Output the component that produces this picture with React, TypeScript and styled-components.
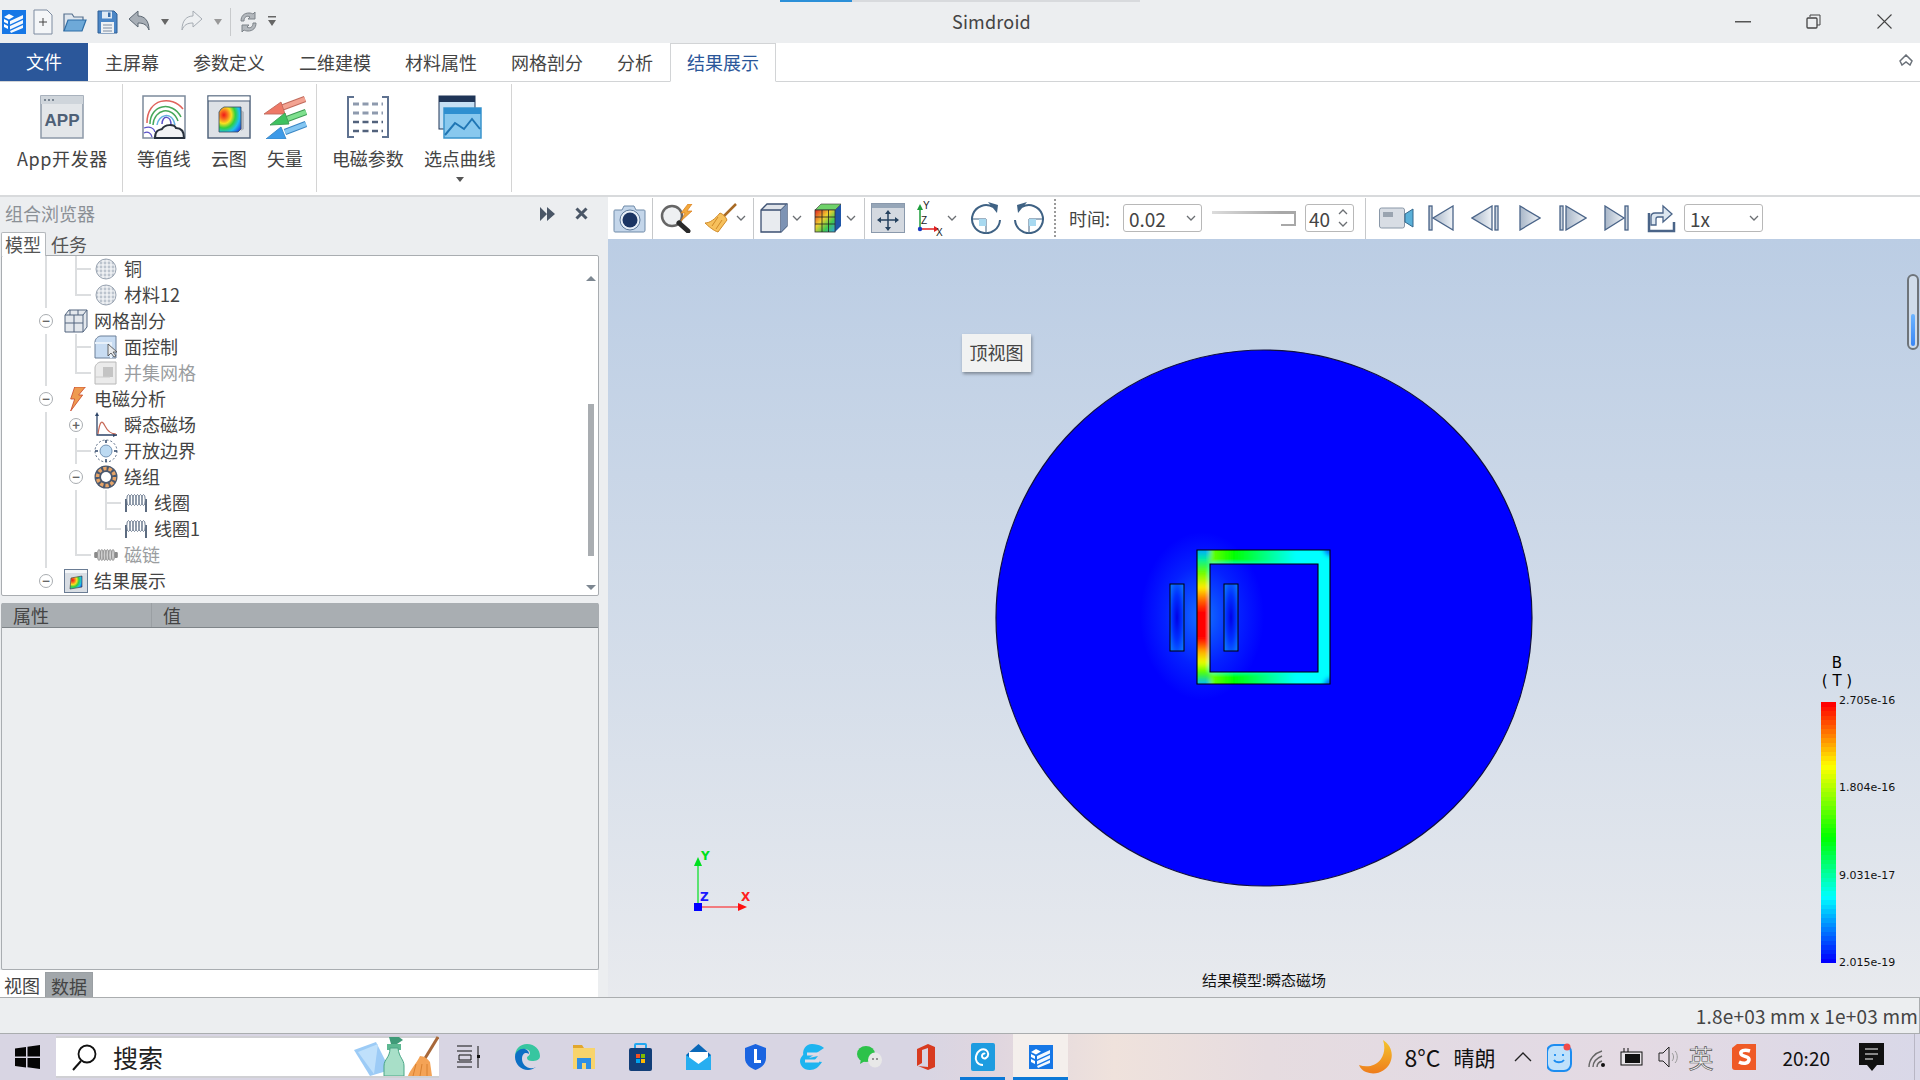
import React from "react";
import styled, { createGlobalStyle } from "styled-components";

const Global = createGlobalStyle`
  html, body { margin: 0; padding: 0; width: 1920px; height: 1080px; overflow: hidden; background: #eceef0; }
  body { font-family: "Noto Sans CJK SC", "Microsoft YaHei", sans-serif; font-size: 18px; color: #444; }
  svg { display: block; flex-shrink: 0; }
`;

const Shell = styled.div`width:1920px;height:1080px;display:flex;flex-direction:column;overflow:hidden;`;
const Hidden = styled.svg`position:absolute;width:0;height:0;`;
const Slot = styled.div<{ $ml?: number }>`display:flex;align-items:center;justify-content:center;flex-shrink:0;margin-left:${p => p.$ml ?? 0}px;`;

/* ---------- title bar ---------- */
const TitleBar = styled.header`height:43px;flex-shrink:0;background:#eceef0;display:flex;align-items:center;position:relative;`;
const TopAccent = styled.div`position:absolute;left:780px;top:0;width:360px;height:2px;background:linear-gradient(90deg,#2b8fd8 0,#2b8fd8 20%,#d8dadd 20%,#d8dadd 100%);`;
const TitleText = styled.div`flex:1;text-align:center;font-size:18px;line-height:24px;padding-bottom:2px;color:#444;letter-spacing:.2px;`;
const QuickSep = styled.div<{ $ml: number }>`width:1px;height:28px;background:#c8cacc;margin-left:${p => p.$ml}px;`;
const WinControls = styled.div`width:213px;display:flex;flex-shrink:0;`;
const WinBtn = styled.div`width:71px;height:43px;display:flex;align-items:center;justify-content:center;`;

/* ---------- ribbon ---------- */
const TabStrip = styled.nav`height:39px;flex-shrink:0;background:#fff;border-bottom:1px solid #d2d4d6;box-sizing:border-box;display:flex;position:relative;`;
const FileTab = styled.div`width:88px;background:#2b579a;color:#fff;display:flex;align-items:center;justify-content:center;font-size:18px;padding-bottom:2px;box-sizing:border-box;`;
const Tab = styled.div<{ $active?: boolean }>`
  padding:0 16px 2px;display:flex;align-items:center;font-size:18px;box-sizing:border-box;
  color:${p => (p.$active ? "#2b579a" : "#444")};
  border:1px solid ${p => (p.$active ? "#d2d4d6" : "transparent")};
  border-bottom:${p => (p.$active ? "1px solid #fff" : "1px solid transparent")};
  height:39px;
`;
const Collapse = styled.div`position:absolute;right:7px;top:11px;`;
const Ribbon = styled.section`height:115px;flex-shrink:0;background:#fff;border-bottom:2px solid #d8dadc;box-sizing:border-box;padding:2px 0 3px;display:flex;`;
const RGroup = styled.div<{ $pl: number; $pr: number }>`display:flex;gap:20px;padding:0 ${p => p.$pr}px 0 ${p => p.$pl}px;border-right:1px solid #d4d4d4;`;
const RButton = styled.div`display:flex;flex-direction:column;align-items:center;padding-top:11px;`;
const RIcon = styled.div`margin:0 -10px;display:flex;`;
const RLabel = styled.div<{ $track?: number }>`margin-top:7px;font-size:18px;line-height:24px;color:#444;white-space:nowrap;letter-spacing:${p => p.$track ?? 0}px;`;
const RCaret = styled.div`margin-top:7px;width:0;height:0;border-left:4px solid transparent;border-right:4px solid transparent;border-top:5px solid #555;`;

/* ---------- workspace ---------- */
const Workspace = styled.main`height:800px;flex-shrink:0;display:flex;`;
const Side = styled.aside`width:608px;flex-shrink:0;background:#eceef0;display:flex;flex-direction:column;`;
const SideHead = styled.div`height:35px;display:flex;align-items:center;padding-left:5px;padding-bottom:4px;box-sizing:border-box;color:#8b9096;font-size:18px;`;
const SideHeadBtns = styled.div`margin-left:auto;display:flex;align-items:center;gap:20px;padding-right:20px;padding-top:2px;`;
const TopTabs = styled.div`height:23px;display:flex;position:relative;z-index:1;`;
const TopTab = styled.div<{ $on?: boolean }>`
  width:${p => (p.$on ? 45 : 46)}px;margin-left:1px;height:24px;box-sizing:border-box;padding-left:3px;
  font-size:18px;line-height:22px;color:#555;background:${p => (p.$on ? "#fff" : "transparent")};
  border:${p => (p.$on ? "1px solid #b4b8bc" : "1px solid transparent")};border-bottom:0;border-radius:2px 2px 0 0;
`;
const TreeBox = styled.div`
  height:341px;width:598px;margin-left:1px;box-sizing:border-box;background:#fff;border:1px solid #a9adb1;border-radius:2px;
  display:flex;overflow:hidden;
`;
const TreeList = styled.div`flex:1;padding:0 0 0 29px;`;
const Row = styled.div`height:26px;display:flex;align-items:center;`;
const Cell = styled.div`width:30px;height:26px;flex-shrink:0;position:relative;display:flex;align-items:center;justify-content:center;`;
const VLine = styled.div<{ $half?: boolean }>`position:absolute;left:14px;top:0;width:2px;height:${p => (p.$half ? 14 : 26)}px;background:#dcdee0;`;
const HLine = styled.div`position:absolute;left:15px;top:12px;width:15px;height:2px;background:#dcdee0;`;
const Expander = styled.div`width:14px;height:14px;box-sizing:border-box;border:1px solid #a9adb1;border-radius:50%;background:#fff;display:flex;align-items:center;justify-content:center;`;
const Glyph = styled.span`font-size:13px;line-height:12px;font-weight:700;color:#666;`;
const TreeText = styled.span<{ $muted?: boolean }>`margin-left:3px;font-size:18px;line-height:24px;padding-bottom:2px;white-space:nowrap;color:${p => (p.$muted ? "#9a9da0" : "#444")};`;
const VScroll = styled.div`width:14px;flex-shrink:0;display:flex;flex-direction:column;align-items:center;padding-top:20px;box-sizing:border-box;`;
const ArrowUp = styled.div`width:0;height:0;border-left:5px solid transparent;border-right:5px solid transparent;border-bottom:5px solid #7d8791;`;
const ArrowDown = styled.div`margin-top:29px;width:0;height:0;border-left:5px solid transparent;border-right:5px solid transparent;border-top:5px solid #7d8791;`;
const Thumb = styled.div`margin-top:123px;width:6px;height:152px;background:#a9adb1;`;
const PropBox = styled.div`margin:7px 0 0 1px;width:598px;height:367px;box-sizing:border-box;border:1px solid #a9adb1;border-top:0;border-radius:2px;display:flex;flex-direction:column;`;
const PropHead = styled.div`height:25px;box-sizing:border-box;background:#a9aeb2;border-bottom:1px solid #7f8589;display:flex;color:#444;font-size:18px;line-height:25px;`;
const PropCol = styled.div<{ $w?: number }>`width:${p => (p.$w ? `${p.$w}px` : "auto")};box-sizing:border-box;padding-left:11px;${p => (p.$w ? "border-right:1px solid #9a9fa3;" : "")}`;
const BottomTabs = styled.div`width:598px;flex:1;background:#fff;display:flex;align-items:flex-end;padding-left:3px;box-sizing:border-box;gap:4px;`;
const BottomTab = styled.div<{ $on?: boolean }>`
  height:25px;padding:0 ${p => (p.$on ? 5 : 1)}px;font-size:18px;line-height:27px;color:#444;
  background:${p => (p.$on ? "#a2a7ab" : "transparent")};border:${p => (p.$on ? "1px solid #9a9fa3" : "0")};border-bottom:0;box-sizing:border-box;
`;

const Right = styled.div`flex:1;display:flex;flex-direction:column;min-width:0;`;
const ToolBar = styled.div`height:42px;flex-shrink:0;background:#fff;display:flex;align-items:center;`;
const VSep = styled.div<{ $ml: number }>`width:1px;height:41px;background:#c6c8ca;margin-left:${p => p.$ml}px;flex-shrink:0;`;
const DotSep = styled.div<{ $ml: number }>`width:0;height:38px;border-left:2px dotted #9a9a9a;margin-left:${p => p.$ml}px;flex-shrink:0;`;
const ToolLabel = styled.div<{ $ml: number }>`margin-left:${p => p.$ml}px;width:41px;font-size:18px;color:#444;white-space:nowrap;flex-shrink:0;`;
const Select = styled.div<{ $ml: number; $w: number; $pr: number }>`
  margin-left:${p => p.$ml}px;width:${p => p.$w}px;height:28px;flex-shrink:0;box-sizing:border-box;border:1px solid #b8b8b8;border-radius:3px;background:#fff;
  display:flex;align-items:center;justify-content:space-between;padding:0 ${p => p.$pr}px 0 5px;font-size:19px;color:#444;
`;
const Slider = styled.div<{ $ml: number }>`margin-left:${p => p.$ml}px;width:84px;height:15px;flex-shrink:0;display:flex;align-items:flex-start;align-self:flex-start;margin-top:14px;`;
const SliderTrack = styled.div`flex:1;height:3px;background:linear-gradient(90deg,#dcdcdc,#a8a8a8);`;
const SliderHandle = styled.div`width:15px;height:15px;box-sizing:border-box;background:#fff;border:1px solid #a8a8a8;border-left:0;border-top-width:3px;border-right-width:2px;border-bottom-width:2px;`;
const Spin = styled.div<{ $ml: number }>`
  margin-left:${p => p.$ml}px;width:49px;height:28px;flex-shrink:0;box-sizing:border-box;border:1px solid #b8b8b8;border-radius:3px;
  display:flex;align-items:center;justify-content:space-between;padding:0 5px 0 3px;font-size:19px;color:#444;
`;
const SpinArrows = styled.div`display:flex;flex-direction:column;gap:6px;`;

const Stage = styled.div`
  flex:1;position:relative;background:linear-gradient(180deg,#bbcde4 0,#e8eaee 100%);
  display:flex;align-items:center;justify-content:center;overflow:hidden;
`;
const ViewTip = styled.div`position:absolute;left:354px;top:95px;width:69px;height:38px;background:#f1f2f2;box-shadow:1px 2px 3px rgba(0,0,0,.35);font-size:18px;line-height:24px;padding-bottom:2px;box-sizing:border-box;color:#444;display:flex;align-items:center;justify-content:center;`;
const Triad = styled.div`position:absolute;left:62px;top:610px;`;
const Caption = styled.div`position:absolute;left:0;right:0;bottom:7px;text-align:center;font-size:15px;line-height:20px;color:#111;`;
const Legend = styled.div`position:absolute;left:1213px;top:415px;display:flex;flex-direction:column;`;
const LegendTitle = styled.div`width:32px;text-align:center;font-family:"DejaVu Sans",sans-serif;font-size:15px;line-height:18px;color:#000;`;
const LegendBody = styled.div`display:flex;`;
const LegendTicks = styled.div`margin:4px 0 0 3px;height:276px;display:flex;flex-direction:column;justify-content:space-between;font-family:"DejaVu Sans",sans-serif;font-size:11px;line-height:14px;color:#111;`;
const LegendBar = styled.div`margin-top:12px;`;
const Level = styled.div`position:absolute;right:1px;top:35px;width:12px;height:76px;box-sizing:border-box;border:2px solid #6e747a;border-radius:6px;background:#d0dcea;display:flex;flex-direction:column;justify-content:flex-end;padding:2px;`;
const LevelFill = styled.div`height:32px;border-radius:3px;background:linear-gradient(180deg,#6db5ff,#3a86f5);`;

/* ---------- bottom ---------- */
const Status = styled.div`height:37px;flex-shrink:0;box-sizing:border-box;background:#eceef0;border:1px solid #aaadaf;border-left:0;display:flex;align-items:center;justify-content:flex-end;padding-right:1px;font-size:19px;letter-spacing:.2px;color:#444;white-space:nowrap;`;
const Taskbar = styled.footer`height:46px;flex-shrink:0;display:flex;align-items:center;color:#111;background:linear-gradient(90deg,#d8d5e3 0,#d8d5e3 48%,#e0d6df 52%,#efe2dc 58%,#e6dce0 66%,#e2dae4 78%,#e4dae3 85%,#d9d8e8 100%);`;
const SearchBox = styled.div<{ $ml: number }>`margin-left:${p => p.$ml}px;width:383px;height:42px;box-sizing:border-box;background:#fff;border:2px solid #d0d0d4;border-left:0;border-right:0;display:flex;align-items:center;padding-left:16px;flex-shrink:0;color:#222;`;
const SearchWord = styled.span`margin-left:16px;font-size:25px;`;
const SearchArt = styled.div`margin-left:auto;align-self:flex-end;`;
const TaskApp = styled.div<{ $ml: number; $w: number; $active?: boolean }>`
  margin-left:${p => p.$ml}px;width:${p => p.$w}px;height:46px;flex-shrink:0;box-sizing:border-box;border-bottom:3px solid #0b78d6;
  display:flex;align-items:center;justify-content:center;padding-top:3px;background:${p => (p.$active ? "#f4efec" : "transparent")};
`;
const Tray = styled.div`margin-left:auto;display:flex;align-items:center;height:46px;`;
const TrayText = styled.span<{ $ml: number; $size?: number }>`margin-left:${p => p.$ml}px;font-size:${p => p.$size ?? 21}px;color:#111;white-space:nowrap;flex-shrink:0;`;
const ImeGlyph = styled.span<{ $ml: number }>`margin-left:${p => p.$ml}px;font-size:25px;color:#f6f6f6;-webkit-text-stroke:.7px #555;flex-shrink:0;`;
const ShowDesktop = styled.div`width:1px;height:46px;background:#b8b6c4;margin:0 5px 0 30px;`;

/* ---------- icons ---------- */
const Logo = ({ s = 24 }: { s?: number }) => (
  <svg width={s} height={s} viewBox="0 0 24 24">
    <rect width="24" height="24" fill="#1677e6" />
    <path d="M2 7l5-3 5 2.5-5 3zM2 9l4 2v3l-4-2zM2 14l4 2v3l-4-2z" fill="#fff" />
    <path d="M8 11l13-6v3.5L8 14.5zM8 16l13-6v3.5L8 19.5zM8 21l13-6v3L9 23z" fill="#fff" opacity=".95" />
  </svg>
);
const NewDoc = () => (<svg width="20" height="26" viewBox="0 0 20 26"><path d="M1 1h13l5 5v19H1z" fill="#f4f6f8" stroke="#7c8ba0" /><path d="M10 9v8M6 13h8" stroke="#444" /></svg>);
const OpenF = () => (<svg width="24" height="22" viewBox="0 0 24 22"><path d="M1 20V3h8l2 3h9v4" fill="#dfe6ee" stroke="#56708e" strokeWidth="1.2" /><path d="M1 20l4-11h18l-4 11z" fill="#6ea9d8" stroke="#2f6ea6" strokeWidth="1.2" /></svg>);
const Save = () => (<svg width="21" height="24" viewBox="0 0 21 24"><path d="M1 1h16l3 3v19H1z" fill="#4b86c6" stroke="#2e5f96" /><rect x="5" y="1.5" width="10" height="7" fill="#dfeaf5" /><rect x="11" y="2.5" width="2.5" height="4.5" fill="#3a6ea8" /><rect x="4" y="12" width="13" height="11" fill="#eef1f4" /><path d="M6 15h9M6 18h9M6 21h9" stroke="#7c8ba0" /></svg>);
const Undo = () => (<svg width="22" height="24" viewBox="0 0 22 24"><path d="M1 9l9-8v5c6 0 11 4 11 14-2-5-5-7-11-7v4z" fill="#a7aeb6" stroke="#5d6873" /></svg>);
const Redo = () => (<svg width="22" height="24" viewBox="0 0 22 24"><path d="M21 9l-9-8v5C6 6 1 10 1 20c2-5 5-7 11-7v4z" fill="#eef0f2" stroke="#a6acb3" /></svg>);
const Caret = ({ c = "#666" }: { c?: string }) => (<svg width="8" height="6" viewBox="0 0 8 6"><path d="M0 0h8L4 6z" fill={c} /></svg>);
const DblCaret = () => (<svg width="8" height="11" viewBox="0 0 8 11"><path d="M0 0h8v1.500H0zM0 4h8L4 10z" fill="#666" /></svg>);
const Refresh = () => (<svg width="19" height="24" viewBox="0 0 19 24"><path d="M2 11c0-5 3-8 8-8 2 0 3 .5 4 1l2-2v7h-7l2-2c-3-2-6 0-6 4z" fill="#b3b8bd" stroke="#7d8389" /><path d="M17 13c0 5-3 8-8 8-2 0-3-.5-4-1l-2 2v-7h7l-2 2c3 2 6 0 6-4z" fill="#b3b8bd" stroke="#7d8389" /></svg>);

const AppIcon = () => (
  <svg width="44" height="44" viewBox="0 0 44 44">
    <rect x="1" y="1" width="42" height="42" fill="#e3e6e9" stroke="#8d99a8" strokeWidth="1.500" />
    <rect x="1" y="1" width="42" height="8" fill="#cfd5db" />
    <path d="M4 5h2M8 5h2M12 5h2" stroke="#5d6b7b" strokeWidth="1.500" />
    <text x="22" y="31" textAnchor="middle" fontFamily="Liberation Sans, sans-serif" fontWeight="700" fontSize="17" fill="#4e6076">APP</text>
  </svg>
);
const Contour = () => (
  <svg width="44" height="44" viewBox="0 0 44 44">
    <rect x="1" y="1" width="42" height="42" fill="#fff" stroke="#7c8a9c" strokeWidth="1.500" />
    <path d="M5 28C5 3 30 0 41 14" fill="none" stroke="#e0635c" strokeWidth="1.500" />
    <path d="M8 29C8 10 30 5 39 22" fill="none" stroke="#46a85a" strokeWidth="1.500" />
    <path d="M11 30C12 14 30 10 36 26" fill="none" stroke="#46a85a" strokeWidth="1.500" />
    <path d="M15 30C16 20 30 15 33 30" fill="none" stroke="#63b0e0" strokeWidth="1.500" />
    <path d="M20 29C20 20 29 20 29 30" fill="none" stroke="#5a52c8" strokeWidth="1.500" />
    <path d="M2 33c6-2 10 0 11 4 M2 38c4-2 7 0 8 4" fill="none" stroke="#5a52c8" strokeWidth="1.200" />
    <path d="M13 43c0-8 4-8 7-9 3-5 12-5 14-1 4 0 8 2 8 10z" fill="#f2f3f5" stroke="#27303c" strokeWidth="2" />
  </svg>
);
const Cloud = () => (
  <svg width="44" height="44" viewBox="0 0 44 44">
    <rect x="1" y="1" width="42" height="42" fill="#dde1e6" stroke="#53657e" strokeWidth="1.500" />
    <rect x="1.500" y="1.500" width="41" height="4" fill="#fff" />
    <path d="M1 6h42" stroke="#53657e" />
    <path d="M34 15l3 2v17l-3 2z" fill="#b4b9c0" />
    <path d="M14 14l3-2h17v22l-3 3H12V17z" fill="url(#cloudFill)" stroke="#3b4a5e" strokeWidth=".8" />
  </svg>
);
const VecArrow = ({ d, head, body, edge, tip }: { d: string; head: string; body: string; edge: string; tip: string }) => (
  <g>
    <path d={d} stroke={edge} strokeWidth="6.500" />
    <path d={d} stroke={body} strokeWidth="4.500" />
    <path d={head} fill={tip} stroke={edge} strokeWidth=".9" />
  </g>
);
const VectorIcon = () => (
  <svg width="44" height="44" viewBox="0 0 44 44">
    <VecArrow d="M42 4L18 13" head="M1 19L18 7l4 12z" body="#f3a392" edge="#c06a5c" tip="#ee7866" />
    <VecArrow d="M43 17L24 24" head="M7 30L22 18l4 11z" body="#7ee08e" edge="#3e9a54" tip="#3ec260" />
    <VecArrow d="M43 29L22 37" head="M3 44L18 32l5 12z" body="#84c6f2" edge="#3a86c4" tip="#3d9ae8" />
  </svg>
);
const EmParam = () => (
  <svg width="44" height="44" viewBox="0 0 44 44">
    <path d="M8 2H2v40h6M36 2h6v40h-6" fill="none" stroke="#5f7290" strokeWidth="2" />
    <path d="M7 9h30M7 18h30" stroke="#8e9aae" strokeWidth="3" strokeDasharray="6 3.500" />
    <path d="M7 27h30M7 36h30" stroke="#52627c" strokeWidth="2.500" strokeDasharray="6 3.500" />
  </svg>
);
const PickCurve = () => (
  <svg width="44" height="44" viewBox="0 0 44 44">
    <rect x="1" y="1" width="36" height="33" fill="#c6e0f4" stroke="#1f3557" />
    <rect x="1" y="1" width="36" height="6" fill="#1f3557" />
    <rect x="6" y="13" width="37" height="30" fill="#88c8ee" stroke="#3a94cc" strokeWidth="1.500" />
    <rect x="6" y="13" width="37" height="6" fill="#2e8fd0" />
    <path d="M7 40l10-12 9 6 8-10 8 10" fill="none" stroke="#2076b4" strokeWidth="2" />
  </svg>
);

const Camera = () => (<svg width="33" height="29" viewBox="0 0 33 29"><path d="M2 6h7l2-4h10l2 4h8c1 0 1 1 1 1v19c0 2-1 2-2 2H2c-1 0-1-1-1-2V7c0-1 1-1 1-1z" fill="#c4d6ea" stroke="#6f8aa8" /><circle cx="17" cy="16" r="10" fill="#e8f0f8" stroke="#5d7a9a" /><circle cx="17" cy="16" r="7.500" fill="#1b3563" /></svg>);
const Zap = () => (<svg width="36" height="29" viewBox="0 0 36 29"><circle cx="13" cy="12" r="10" fill="#eef0f2" stroke="#666" strokeWidth="2.500" /><path d="M20 19l9 8" stroke="#2a2a2a" strokeWidth="5" strokeLinecap="round" /><path d="M29 0l-7 9h4l-4 8 11-10h-5l5-7z" fill="#f2a83c" stroke="#d87c1c" strokeWidth=".7" /></svg>);
const Broom = () => (<svg width="34" height="30" viewBox="0 0 34 30"><path d="M32 1L19 14" stroke="#a86a24" strokeWidth="2.500" /><path d="M16 10c3 1 6 4 7 7l-9 12c-4-1-10-6-13-9 5 0 10-4 15-10z" fill="#f6c05c" stroke="#d08a28" /><path d="M14 14l-6 9M18 17l-6 9" stroke="#d08a28" /></svg>);
const Chev = () => (<svg width="10" height="6" viewBox="0 0 10 6"><path d="M1 1l4 4 4-4" fill="none" stroke="#6b6f73" strokeWidth="1.300" /></svg>);
const CubeI = () => (<svg width="28" height="30" viewBox="0 0 28 30"><path d="M1 7l6-6h20v22l-6 6H1z" fill="#dfe3e9" stroke="#3e5273" strokeWidth="1.300" /><path d="M1 7h20v22M21 7l6-6" fill="none" stroke="#3e5273" strokeWidth="1.300" /><path d="M21 7l6-6v22l-6 6z" fill="#7d93b4" /><rect x="2" y="8" width="18" height="20" fill="#e8ebef" /></svg>);
const GridBox = () => (<svg width="28" height="30" viewBox="0 0 28 30"><path d="M21 7l6-6v22l-6 6z" fill="#1f56a8" /><path d="M1 7l6-6h20l-6 6z" fill="#6fd26a" stroke="#333" strokeWidth=".6" /><rect x="1" y="7" width="20" height="22" fill="url(#rainbowV)" stroke="#333" strokeWidth=".8" /><path d="M8 7v22M14.500 7v22M1 14h20M1 21h20" stroke="#222" strokeWidth=".8" /></svg>);
const Fit = () => (<svg width="34" height="30" viewBox="0 0 34 30"><rect x=".5" y=".5" width="33" height="29" fill="#d4d9e0" stroke="#8a99ac" /><rect x="1" y="1" width="32" height="4" fill="#96a6b8" /><path d="M17 9v17M8 17h18" stroke="#26425f" strokeWidth="1.500" /><path d="M17 7l-3 4h6zM17 28l-3-4h6zM6 17l4-3v6zM28 17l-4-3v6z" fill="#26425f" /></svg>);
const AxesI = () => (<svg width="28" height="36" viewBox="0 0 28 36"><path d="M5 29V7" stroke="#1e9e3c" strokeWidth="1.500" /><path d="M5 4l-3 6h6z" fill="#1e9e3c" /><path d="M5 29h16" stroke="#e02020" strokeWidth="1.500" /><path d="M24 29l-5-3v6z" fill="#e02020" /><circle cx="5" cy="29" r="2.200" fill="#1a3cc0" /><text x="8" y="9" fontFamily="Liberation Sans,sans-serif" fontSize="10" fill="#222">Y</text><text x="6" y="24" fontFamily="Liberation Sans,sans-serif" fontSize="10" fill="#222">Z</text><text x="21" y="36" fontFamily="Liberation Sans,sans-serif" fontSize="10" fill="#222">X</text></svg>);
const Rot = ({ flip }: { flip?: boolean }) => (<svg width="31" height="32" viewBox="0 0 31 32"><g transform={flip ? "translate(31 0) scale(-1 1)" : undefined}><path d="M23 5A14 14 0 1 0 30 18" fill="none" stroke="#3f6284" strokeWidth="2" /><path d="M18 0l10 3-1 8z" fill="#3f6284" /><path d="M2 17h14v14" fill="none" stroke="#3f6284" /><rect x="9" y="17" width="7" height="7" fill="#a8d9f0" /></g></svg>);
const Video = () => (<svg width="35" height="24" viewBox="0 0 35 24"><rect x=".5" y="2" width="25" height="20" rx="2" fill="#d8dde4" stroke="#8a98a8" /><rect x="4" y="6" width="10" height="5" fill="#9aa4b0" /><path d="M26 8l8-5v18l-8-5z" fill="#5ab0d8" stroke="#32678c" /></svg>);
const ctl = { fill: "url(#ctlFill)", stroke: "#4a6488", strokeWidth: 1.300 };
const Skip = () => (<svg width="26" height="26" viewBox="0 0 26 26"><rect x="1" y="1" width="3" height="24" {...ctl} /><path d="M25 1v24L5 13z" {...ctl} /></svg>);
const Prev = () => (<svg width="28" height="26" viewBox="0 0 28 26"><path d="M21 1v24L1 13z" {...ctl} /><rect x="24" y="1" width="3" height="24" {...ctl} /></svg>);
const Play = () => (<svg width="22" height="26" viewBox="0 0 22 26"><path d="M1 1v24l20-12z" {...ctl} /></svg>);
const Next = () => (<svg width="28" height="26" viewBox="0 0 28 26"><rect x="1" y="1" width="3" height="24" {...ctl} /><path d="M7 1v24l20-12z" {...ctl} /></svg>);
const EndI = () => (<svg width="25" height="26" viewBox="0 0 25 26"><path d="M1 1v24l19-12z" {...ctl} /><rect x="21" y="1" width="3" height="24" {...ctl} /></svg>);
const Export = () => (<svg width="29" height="30" viewBox="0 0 29 30"><path d="M2 10v18h25v-9" fill="none" stroke="#4a6488" strokeWidth="2.500" /><path d="M4 22v-8c0-3 2-4 4-4h8V3l9 8-9 8v-5h-5c-1 0-2 1-2 2v6z" fill="#dce6f0" stroke="#4a6488" strokeWidth="1.300" /></svg>);

const Sphere = () => (<svg width="22" height="24" viewBox="0 0 22 24"><circle cx="11" cy="12" r="10" fill="url(#dots)" stroke="#9ba5b2" /></svg>);
const MeshI = () => (<svg width="24" height="24" viewBox="0 0 24 24"><path d="M1 6l4-5h18v17l-4 5H1z" fill="#e4e8ed" stroke="#52657f" /><path d="M1 6h18v17M19 6l4-5M10 6v17M1 14h18M6 1v5M14 1v5" fill="none" stroke="#52657f" /></svg>);
const FaceI = () => (<svg width="24" height="24" viewBox="0 0 24 24"><path d="M1 7c0-3 3-6 6-6h15v22H1z" fill="#c8dcf2" stroke="#6b7f98" /><path d="M1 8h16v15" fill="none" stroke="#e8f1fa" strokeWidth="2" /><path d="M14 9v12l3-3 3 4 2-1-3-4h4z" fill="#e8eaec" stroke="#444" strokeWidth=".8" /></svg>);
const UnionI = () => (<svg width="24" height="24" viewBox="0 0 24 24"><path d="M1 7c0-3 3-6 6-6h15v22H1z" fill="#ebebeb" stroke="#b8b8b8" /><rect x="9" y="6" width="10" height="10" fill="#c4c4c4" /><path d="M1 16h15" stroke="#ccc" /></svg>);
const EmI = () => (<svg width="20" height="24" viewBox="0 0 14 18"><path d="M6 0h8L9 6h3L3 18l3-9H3z" fill="#ee9a50" stroke="#c8452a" strokeWidth=".6" /></svg>);
const CurveI = () => (<svg width="22" height="26" viewBox="0 0 22 26"><path d="M2 2v21h20" fill="none" stroke="#2c4468" strokeWidth="1.300" /><path d="M0 4l2-4 2 4zM18 21l4 2-4 2z" fill="#2c4468" /><path d="M3 22c2-14 4-14 7-8s6 8 11 8" fill="none" stroke="#c76a58" strokeWidth="1.200" /></svg>);
const OpenI = () => (<svg width="24" height="24" viewBox="0 0 24 24"><circle cx="12" cy="12" r="11" fill="none" stroke="#52657f" strokeDasharray="2 2" /><circle cx="12" cy="12" r="6" fill="#bcdaf2" stroke="#7292b4" /><path d="M12 1v3M12 20v3M1 12h3M20 12h3" stroke="#2c4468" strokeWidth="1.500" /></svg>);
const WindI = () => (<svg width="24" height="24" viewBox="0 0 24 24"><circle cx="12" cy="12" r="11.500" fill="#4a586e" /><circle cx="12" cy="12" r="8.500" fill="none" stroke="#e6a468" strokeWidth="3.500" strokeDasharray="3.300 2" /><circle cx="12" cy="12" r="5" fill="#fff" /></svg>);
const loops = [0, 1, 2, 3, 4, 5];
const CoilI = () => (
  <svg width="24" height="20" viewBox="0 0 24 20">
    <path d="M2 6v13M22 6v13" stroke="#5c6b80" strokeWidth="2" />
    {loops.map(i => <ellipse key={i} cx={4.500 + i * 3} cy="7" rx="1.700" ry="5.500" fill="none" stroke="#6f7e92" strokeWidth="1" />)}
  </svg>
);
const ChainI = () => (
  <svg width="24" height="20" viewBox="0 0 24 20">
    <path d="M0 8h24v4H0z" fill="#b6b6b6" />
    <path d="M2 7v6M22 7v6" stroke="#8a8a8a" strokeWidth="3" />
    {loops.map(i => <ellipse key={i} cx={5 + i * 2.800} cy="10" rx="1.500" ry="5.500" fill="#cfcfcf" stroke="#8f8f8f" strokeWidth=".9" />)}
  </svg>
);
const ResI = () => (<svg width="24" height="24" viewBox="0 0 24 24"><rect x=".5" y=".5" width="23" height="23" fill="#d8dde3" stroke="#6a7c94" /><rect x="1" y="1" width="22" height="3" fill="#f4f6f8" /><path d="M7 9l11-2v11l-12 2z" fill="url(#cloudFill)" stroke="#333" strokeWidth=".6" /></svg>);

const WinLogo = () => (<svg width="25" height="24" viewBox="0 0 25 24"><path d="M0 3.500l11-1.500v9.500H0zM12.500 1.800L25 0v11.500H12.500zM0 13h11v9.500L0 21zM12.500 13H25v11l-12.500-1.700z" fill="#050505" /></svg>);
const SearchI = () => (<svg width="25" height="27" viewBox="0 0 25 27"><circle cx="15" cy="10" r="8.500" fill="none" stroke="#111" strokeWidth="1.800" /><path d="M9 17L1 26" stroke="#111" strokeWidth="2" /></svg>);
const SearchPic = () => (
  <svg width="85" height="40" viewBox="0 0 85 40">
    <path d="M0 14L22 6l14 28-20 6z" fill="#9ccbf6" /><path d="M4 16l20-8-4 30" fill="#bfe0fb" />
    <rect x="33" y="8" width="14" height="6" fill="#5db892" /><path d="M35 1h10l4 3-6 4h-6z" fill="#3f9a78" />
    <path d="M36 12h8c1 10 6 11 6 18v10H30V30c0-7 6-8 6-18z" fill="#a8dfc8" stroke="#4aa686" />
    <path d="M84 1L70 24" stroke="#a8683a" strokeWidth="3" /><path d="M66 20c4 0 8 3 10 6l2 14H54c2-6 8-12 12-20z" fill="#f4a356" />
    <path d="M62 28l-3 12M68 28l-2 12M73 28v12" stroke="#d88030" />
  </svg>
);
const TaskView = () => (<svg width="24" height="24" viewBox="0 0 24 24"><path d="M1 1h15M1 6h15M1 17h15M1 22h15M3 10h12v5H3zM22 1v22" fill="none" stroke="#111" /><rect x="21" y="10" width="3" height="3" fill="#111" /></svg>);
const EdgeI = () => (<svg width="25" height="26" viewBox="0 0 25 26"><path d="M12 0c8 0 13 6 13 12 0 4-4 5-8 5-3 0-5-1-5-3 0-2 3-2 3-5 0-3-4-5-8-3C2 8 0 11 0 13 0 5 5 0 12 0z" fill="#37c6a0" /><path d="M0 13c0-6 6-9 10-8 3 1 4 3 4 5-3-2-7-1-7 5 0 6 7 12 14 8-3 2-5 3-8 3C6 26 0 20 0 13z" fill="#0c6fc4" /></svg>);
const FolderI = () => (<svg width="22" height="26" viewBox="0 0 22 26"><path d="M0 1h9l2 3h-11z" fill="#e2a72e" /><rect y="4" width="22" height="21" fill="#f8d46c" /><rect x="4" y="14" width="14" height="11" fill="#2f8fe4" /><rect x="9" y="19" width="4" height="6" fill="#f8d46c" /></svg>);
const StoreI = () => (<svg width="23" height="28" viewBox="0 0 23 28"><path d="M6 5V2c0-1 1-1 1-1h9s1 0 1 1v3" fill="none" stroke="#22a8f0" strokeWidth="2" /><rect y="5" width="23" height="23" rx="2" fill="#123e78" /><rect x="7" y="11" width="4" height="4" fill="#f25022" /><rect x="12" y="11" width="4" height="4" fill="#7fba00" /><rect x="7" y="16" width="4" height="4" fill="#00a4ef" /><rect x="12" y="16" width="4" height="4" fill="#ffb900" /></svg>);
const MailI = () => (<svg width="25" height="26" viewBox="0 0 25 26"><path d="M0 11L12.500 0 25 11v15H0z" fill="#0a68b8" /><path d="M3 8h19v8l-9.500 5L3 16z" fill="#fff" /><path d="M0 11l12.500 9L25 11v15H0z" fill="#27aef0" /></svg>);
const LensI = () => (<svg width="21" height="26" viewBox="0 0 21 26"><path d="M10.500 0L21 4v10c0 7-6 10-10.500 12C6 24 0 21 0 14V4z" fill="#1a64e0" /><path d="M9 5h3v11h4v3H9z" fill="#fff" /></svg>);
const E2I = () => (<svg width="24" height="26" viewBox="0 0 24 26"><path d="M12 0c8 0 12 4 12 4L9 14l9-2-4 5 8 1c-3 5-7 8-12 8-7 0-10-5-10-9 0-3 2-5 4-7l6-1L4 14C1 6 6 0 12 0z" fill="#1db4f0" /><path d="M7 10h12M5 17h14" stroke="#e0dbe6" strokeWidth="3" /></svg>);
const WechatI = () => (<svg width="25" height="24" viewBox="0 0 25 24"><ellipse cx="9" cy="9" rx="9" ry="8" fill="#2dc24a" /><path d="M4 14l-1 5 5-3z" fill="#2dc24a" /><ellipse cx="18" cy="15" rx="7" ry="7.500" fill="#e8e8e8" /><circle cx="16" cy="14" r="1" fill="#777" /><circle cx="20" cy="14" r="1" fill="#777" /></svg>);
const OfficeI = () => (<svg width="18" height="26" viewBox="0 0 18 26"><path d="M11 0l7 3v20l-7 3-10-4 10 1V4L5 6v13l-5 3V5z" fill="#d83b20" /></svg>);
const SimApp = () => (<svg width="24" height="28" viewBox="0 0 24 28"><rect width="24" height="28" rx="2" fill="#1e9ce0" /><path d="M12 22c-6 0-8-5-7-9 1-5 6-8 10-6 3 2 3 6 0 8-2 1-4 0-4-2s2-3 3-2" fill="none" stroke="#fff" strokeWidth="2" /></svg>);
const Moon = () => (<svg width="33" height="34" viewBox="0 0 33 34"><path d="M24 0c8 5 11 14 7 23-4 8-14 13-24 9-3-1-6-4-7-7 8 3 17 1 22-6 4-6 4-13 2-19z" fill="url(#moon)" /></svg>);
const FaceTray = () => (<svg width="25" height="29" viewBox="0 0 25 29"><rect y="2" width="24" height="26" rx="7" fill="#bfe1fb" stroke="#1c8cf0" strokeWidth="2" /><path d="M8 11v2M16 11v2M7 17c2 3 8 3 10 0" stroke="#1c8cf0" strokeWidth="1.800" fill="none" /><circle cx="20" cy="4" r="3.500" fill="#f04a4a" /></svg>);
const Wifi = () => (<svg width="18" height="22" viewBox="0 0 18 22"><path d="M1 21C1 13 7 7 14 5M5 21c0-5 4-9 9-11M9 21c0-3 2-5 5-6" fill="none" stroke="#666" strokeWidth="1.400" /><circle cx="15" cy="19" r="2" fill="#111" /></svg>);
const Battery = () => (<svg width="23" height="20" viewBox="0 0 23 20"><path d="M4 1v4M8 1v4" stroke="#111" /><rect x="1" y="5" width="21" height="13" fill="#e8e4e8" stroke="#111" /><rect x="5" y="7" width="15" height="9" fill="#111" /></svg>);
const Speaker = () => (<svg width="22" height="24" viewBox="0 0 22 24"><path d="M1 8h4l6-6v20l-6-6H1z" fill="none" stroke="#222" /><path d="M14 8c2 2 2 6 0 8M17 6c3 3 3 9 0 12" fill="none" stroke="#999" /></svg>);
const SogouI = () => (<svg width="25" height="28" viewBox="0 0 25 28"><path d="M5 1h19v26H3a3 3 0 0 1-3-3V5z" fill="#ef5a26" /><path d="M18 8c-6-2-10 0-9 3s9 2 8 6-6 4-10 2" fill="none" stroke="#fff" strokeWidth="3.500" /></svg>);
const Notif = () => (<svg width="25" height="28" viewBox="0 0 25 28"><path d="M0 0h25v22h-7l-5 6-5-6H0z" fill="#111" /><path d="M6 6h13M6 11h13M6 16h8" stroke="#fff" /></svg>);

/* ---------- plot ---------- */
const mix = (a: number[], b: number[], t: number) => a.map((v, i) => Math.round(v + (b[i] - v) * t));
const legendStops: [number, number[]][] = [[0, [255, 0, 0]], [0.24, [255, 255, 0]], [0.52, [0, 255, 0]], [0.75, [0, 255, 255]], [1, [0, 0, 255]]];
const legendColor = (t: number) => {
  for (let i = 1; i < legendStops.length; i++) {
    if (t <= legendStops[i][0]) {
      const [t0, c0] = legendStops[i - 1];
      const [t1, c1] = legendStops[i];
      return `rgb(${mix(c0, c1, (t - t0) / (t1 - t0)).join(",")})`;
    }
  }
  return "rgb(0,0,255)";
};
const bands = Array.from({ length: 58 }, (_, i) => i);
const LegendStrip = () => (
  <svg width="15" height="261" viewBox="0 0 15 261" shapeRendering="crispEdges">
    {bands.map(i => <rect key={i} x="0" y={i * 4.5} width="15" height="4.600" fill={legendColor(i / 57)} />)}
  </svg>
);

const corePath = "M203 202H336V336H203Z M216 216V324H324V216Z";
const Field = () => (
  <svg width="540" height="540" viewBox="0 0 540 540">
    <defs>
      <clipPath id="coreClip"><path d={corePath} clipRule="evenodd" /></clipPath>
      <clipPath id="diskClip"><circle cx="270" cy="270" r="268" /></clipPath>
      <filter id="soft" x="-20%" y="-20%" width="140%" height="140%"><feGaussianBlur stdDeviation="2.200" /></filter>
      <radialGradient id="halo"><stop offset="0" stopColor="#1474ff" /><stop offset=".3" stopColor="#0a48ff" /><stop offset=".6" stopColor="#0420ff" /><stop offset="1" stopColor="#0000ff" /></radialGradient>
      <radialGradient id="coilFill" cx=".5" cy=".5" r=".6"><stop offset="0" stopColor="#0000e8" /><stop offset=".55" stopColor="#0030ff" /><stop offset="1" stopColor="#0a70ff" /></radialGradient>
      <linearGradient id="coreV" gradientUnits="userSpaceOnUse" x1="0" y1="202" x2="0" y2="336">
        <stop offset="0" stopColor="#00a8ff" /><stop offset=".07" stopColor="#00f0a0" /><stop offset=".16" stopColor="#60ff00" /><stop offset=".28" stopColor="#ffee00" /><stop offset=".38" stopColor="#ff6000" /><stop offset=".46" stopColor="#ff0000" /><stop offset=".66" stopColor="#ff0000" /><stop offset=".76" stopColor="#ffb000" /><stop offset=".84" stopColor="#eaff00" /><stop offset=".92" stopColor="#40ff00" /><stop offset="1" stopColor="#00b8ff" />
      </linearGradient>
      <linearGradient id="coreH" gradientUnits="userSpaceOnUse" x1="216" y1="0" x2="336" y2="0">
        <stop offset="0" stopColor="#70ff00" /><stop offset=".2" stopColor="#00ff00" /><stop offset=".55" stopColor="#00ffb0" /><stop offset=".72" stopColor="#00ffff" /><stop offset="1" stopColor="#00ffff" />
      </linearGradient>
    </defs>
    <circle cx="270" cy="270" r="268" fill="#0000ff" stroke="#101040" strokeWidth="1.200" />
    <g clipPath="url(#diskClip)">
      <ellipse cx="208" cy="268" rx="62" ry="84" fill="url(#halo)" />
    </g>
    <rect x="176" y="236" width="14" height="67" fill="url(#coilFill)" stroke="#000" strokeWidth="1" />
    <rect x="230" y="236" width="14" height="67" fill="url(#coilFill)" stroke="#000" strokeWidth="1" />
    <g clipPath="url(#coreClip)">
      <g filter="url(#soft)">
        <rect x="190" y="190" width="160" height="160" fill="#00ffff" />
        <rect x="210" y="192" width="115" height="24" fill="url(#coreH)" />
        <rect x="210" y="324" width="115" height="24" fill="url(#coreH)" />
        <rect x="195" y="192" width="21" height="154" fill="url(#coreV)" />
        <circle cx="338" cy="200" r="9" fill="#0078ff" />
        <circle cx="338" cy="338" r="9" fill="#0078ff" />
      </g>
    </g>
    <path d={corePath} fill="none" stroke="#000" strokeWidth="1.100" />
  </svg>
);
const TriadSvg = () => (
  <svg width="80" height="70" viewBox="0 0 80 70" fontFamily="DejaVu Sans, sans-serif" fontWeight="700" fontSize="12">
    <path d="M28 58V16" stroke="#00e020" strokeWidth="1.200" />
    <path d="M28 8l-4 9h8z" fill="#00e020" />
    <path d="M28 58h40" stroke="#ff1010" strokeWidth="1.200" />
    <path d="M77 58l-9-4v8z" fill="#ff1010" />
    <rect x="24" y="54" width="8" height="8" fill="#0000ff" />
    <text x="31" y="11" fill="#00e020">Y</text>
    <text x="30" y="52" fill="#1a1aff">Z</text>
    <text x="71" y="52" fill="#ff2020">X</text>
  </svg>
);

/* ---------- data ---------- */
type Kind = "v" | "t" | "e" | "minus" | "plus";
interface Node { cells: Kind[]; icon: React.ReactNode; text: string; muted?: boolean; }
const tree: Node[] = [
  { cells: ["v", "t"], icon: <Sphere />, text: "铜" },
  { cells: ["v", "e"], icon: <Sphere />, text: "材料12" },
  { cells: ["minus"], icon: <MeshI />, text: "网格剖分" },
  { cells: ["v", "t"], icon: <FaceI />, text: "面控制" },
  { cells: ["v", "e"], icon: <UnionI />, text: "并集网格", muted: true },
  { cells: ["minus"], icon: <EmI />, text: "电磁分析" },
  { cells: ["v", "plus"], icon: <CurveI />, text: "瞬态磁场" },
  { cells: ["v", "t"], icon: <OpenI />, text: "开放边界" },
  { cells: ["v", "minus"], icon: <WindI />, text: "绕组" },
  { cells: ["v", "v", "t"], icon: <CoilI />, text: "线圈" },
  { cells: ["v", "v", "e"], icon: <CoilI />, text: "线圈1" },
  { cells: ["v", "e"], icon: <ChainI />, text: "磁链", muted: true },
  { cells: ["minus"], icon: <ResI />, text: "结果展示" },
];
const tabs = ["主屏幕", "参数定义", "二维建模", "材料属性", "网格剖分", "分析"];

const TreeCell = ({ kind }: { kind: Kind }) => (
  <Cell>
    {kind === "v" && <VLine />}
    {kind === "t" && (<><VLine /><HLine /></>)}
    {kind === "e" && (<><VLine $half /><HLine /></>)}
    {(kind === "minus" || kind === "plus") && <Expander><Glyph>{kind === "minus" ? "−" : "+"}</Glyph></Expander>}
  </Cell>
);

export default function App() {
  return (
    <Shell>
      <Global />
      <Hidden aria-hidden="true">
        <defs>
          <radialGradient id="cloudFill" cx=".22" cy=".32" r=".95">
            <stop offset="0" stopColor="#f01818" /><stop offset=".18" stopColor="#f87020" /><stop offset=".36" stopColor="#f8e020" /><stop offset=".55" stopColor="#30d040" /><stop offset=".75" stopColor="#20c0f0" /><stop offset="1" stopColor="#2040e0" />
          </radialGradient>
          <linearGradient id="rainbowV" x1="0" y1="0" x2="1" y2="1">
            <stop offset="0" stopColor="#e02020" /><stop offset=".4" stopColor="#f0d030" /><stop offset=".7" stopColor="#40c850" /><stop offset="1" stopColor="#30a0e8" />
          </linearGradient>
          <linearGradient id="ctlFill" x1="0" y1="0" x2="1" y2="0">
            <stop offset="0" stopColor="#a8b6c8" /><stop offset="1" stopColor="#eef2f6" />
          </linearGradient>
          <linearGradient id="moon" x1="0" y1="0" x2="0" y2="1">
            <stop offset="0" stopColor="#f5c52c" /><stop offset="1" stopColor="#ee7c1c" />
          </linearGradient>
          <pattern id="dots" width="4" height="4" patternUnits="userSpaceOnUse">
            <rect width="4" height="4" fill="#eef0f3" /><circle cx="2" cy="2" r="1.400" fill="#bcc4ce" />
          </pattern>
        </defs>
      </Hidden>

      <TitleBar>
        <TopAccent />
        <Slot $ml={2}><Logo /></Slot>
        <Slot $ml={7}><NewDoc /></Slot>
        <Slot $ml={10}><OpenF /></Slot>
        <Slot $ml={10}><Save /></Slot>
        <Slot $ml={10}><Undo /></Slot>
        <Slot $ml={11}><Caret /></Slot>
        <Slot $ml={12}><Redo /></Slot>
        <Slot $ml={11}><Caret c="#999" /></Slot>
        <QuickSep $ml={8} />
        <Slot $ml={8}><Refresh /></Slot>
        <Slot $ml={10}><DblCaret /></Slot>
        <TitleText>Simdroid</TitleText>
        <WinControls>
          <WinBtn><svg width="16" height="2" viewBox="0 0 16 2"><rect width="16" height="1.500" fill="#555" /></svg></WinBtn>
          <WinBtn><svg width="15" height="15" viewBox="0 0 15 15"><path d="M4 3V1h10v10h-3" fill="none" stroke="#444" /><rect x="1" y="4" width="10" height="10" rx="1" fill="none" stroke="#444" strokeWidth="1.300" /></svg></WinBtn>
          <WinBtn><svg width="15" height="15" viewBox="0 0 15 15"><path d="M.5.5l14 14M14.500.5l-14 14" stroke="#444" strokeWidth="1.100" /></svg></WinBtn>
        </WinControls>
      </TitleBar>

      <TabStrip>
        <FileTab>文件</FileTab>
        {tabs.map(t => <Tab key={t}>{t}</Tab>)}
        <Tab $active>结果展示</Tab>
        <Collapse><svg width="14" height="12" viewBox="0 0 14 12"><path d="M1 7l6-6 6 6-2 4-4-3-4 3z" fill="none" stroke="#6a7078" strokeWidth="1.500" /></svg></Collapse>
      </TabStrip>

      <Ribbon>
        <RGroup $pl={17} $pr={14}>
          <RButton><RIcon><AppIcon /></RIcon><RLabel $track={0.6}>App开发器</RLabel></RButton>
        </RGroup>
        <RGroup $pl={14} $pr={13}>
          <RButton><RIcon><Contour /></RIcon><RLabel>等值线</RLabel></RButton>
          <RButton><RIcon><Cloud /></RIcon><RLabel>云图</RLabel></RButton>
          <RButton><RIcon><VectorIcon /></RIcon><RLabel>矢量</RLabel></RButton>
        </RGroup>
        <RGroup $pl={15} $pr={15}>
          <RButton><RIcon><EmParam /></RIcon><RLabel>电磁参数</RLabel></RButton>
          <RButton><RIcon><PickCurve /></RIcon><RLabel>选点曲线</RLabel><RCaret /></RButton>
        </RGroup>
      </Ribbon>

      <Workspace>
        <Side>
          <SideHead>
            组合浏览器
            <SideHeadBtns>
              <svg width="15" height="14" viewBox="0 0 15 14"><path d="M0 0l7 7-7 7zM7 0l8 7-8 7z" fill="#4a5666" /></svg>
              <svg width="13" height="13" viewBox="0 0 13 13"><path d="M1.500 1.500l10 10M11.500 1.500l-10 10" stroke="#4a5666" strokeWidth="3" /></svg>
            </SideHeadBtns>
          </SideHead>
          <TopTabs>
            <TopTab $on>模型</TopTab>
            <TopTab>任务</TopTab>
          </TopTabs>
          <TreeBox>
            <TreeList>
              {tree.map(n => (
                <Row key={n.text}>
                  {n.cells.map((c, i) => <TreeCell key={i} kind={c} />)}
                  <Cell>{n.icon}</Cell>
                  <TreeText $muted={n.muted}>{n.text}</TreeText>
                </Row>
              ))}
            </TreeList>
            <VScroll>
              <ArrowUp />
              <Thumb />
              <ArrowDown />
            </VScroll>
          </TreeBox>
          <PropBox>
            <PropHead>
              <PropCol $w={150}>属性</PropCol>
              <PropCol>值</PropCol>
            </PropHead>
          </PropBox>
          <BottomTabs>
            <BottomTab>视图</BottomTab>
            <BottomTab $on>数据</BottomTab>
          </BottomTabs>
        </Side>

        <Right>
          <ToolBar>
            <Slot $ml={5}><Camera /></Slot>
            <VSep $ml={6} />
            <Slot $ml={6}><Zap /></Slot>
            <Slot $ml={9}><Broom /></Slot>
            <Slot $ml={-2}><Chev /></Slot>
            <VSep $ml={7} />
            <Slot $ml={6}><CubeI /></Slot>
            <Slot $ml={4}><Chev /></Slot>
            <Slot $ml={12}><GridBox /></Slot>
            <Slot $ml={4}><Chev /></Slot>
            <VSep $ml={8} />
            <Slot $ml={6}><Fit /></Slot>
            <Slot $ml={10}><AxesI /></Slot>
            <Slot $ml={4}><Chev /></Slot>
            <Slot $ml={13}><Rot /></Slot>
            <Slot $ml={13}><Rot flip /></Slot>
            <DotSep $ml={9} />
            <ToolLabel $ml={13}>时间:</ToolLabel>
            <Select $ml={13} $w={79} $pr={5}>0.02<Chev /></Select>
            <Slider $ml={10}><SliderTrack /><SliderHandle /></Slider>
            <Spin $ml={9}>40
              <SpinArrows>
                <svg width="10" height="6" viewBox="0 0 10 6"><path d="M1 5l4-4 4 4" fill="none" stroke="#6b6f73" strokeWidth="1.300" /></svg>
                <Chev />
              </SpinArrows>
            </Spin>
            <VSep $ml={11} />
            <Slot $ml={13}><Video /></Slot>
            <Slot $ml={14}><Skip /></Slot>
            <Slot $ml={17}><Prev /></Slot>
            <Slot $ml={20}><Play /></Slot>
            <Slot $ml={18}><Next /></Slot>
            <Slot $ml={17}><EndI /></Slot>
            <Slot $ml={18}><Export /></Slot>
            <Select $ml={8} $w={79} $pr={3}>1x<Chev /></Select>
          </ToolBar>
          <Stage>
            <Field />
            <ViewTip>顶视图</ViewTip>
            <Triad><TriadSvg /></Triad>
            <Caption>结果模型:瞬态磁场</Caption>
            <Legend>
              <LegendTitle>B</LegendTitle>
              <LegendTitle>( T )</LegendTitle>
              <LegendBody>
                <LegendBar><LegendStrip /></LegendBar>
                <LegendTicks>
                  <span>2.705e-16</span>
                  <span>1.804e-16</span>
                  <span>9.031e-17</span>
                  <span>2.015e-19</span>
                </LegendTicks>
              </LegendBody>
            </Legend>
            <Level><LevelFill /></Level>
          </Stage>
        </Right>
      </Workspace>

      <Status>1.8e+03 mm x 1e+03 mm</Status>

      <Taskbar>
        <Slot $ml={15}><WinLogo /></Slot>
        <SearchBox $ml={16}>
          <SearchI />
          <SearchWord>搜索</SearchWord>
          <SearchArt><SearchPic /></SearchArt>
        </SearchBox>
        <Slot $ml={17}><TaskView /></Slot>
        <Slot $ml={35}><EdgeI /></Slot>
        <Slot $ml={33}><FolderI /></Slot>
        <Slot $ml={34}><StoreI /></Slot>
        <Slot $ml={34}><MailI /></Slot>
        <Slot $ml={34}><LensI /></Slot>
        <Slot $ml={34}><E2I /></Slot>
        <Slot $ml={33}><WechatI /></Slot>
        <Slot $ml={35}><OfficeI /></Slot>
        <TaskApp $ml={25} $w={45}><SimApp /></TaskApp>
        <TaskApp $ml={8} $w={55} $active><Logo /></TaskApp>
        <Tray>
          <Moon />
          <TrayText $ml={13} $size={23}>8°C</TrayText>
          <TrayText $ml={13}>晴朗</TrayText>
          <Slot $ml={18}><svg width="18" height="10" viewBox="0 0 18 10"><path d="M1 9l8-8 8 8" fill="none" stroke="#222" strokeWidth="1.300" /></svg></Slot>
          <Slot $ml={15}><FaceTray /></Slot>
          <Slot $ml={16}><Wifi /></Slot>
          <Slot $ml={14}><Battery /></Slot>
          <Slot $ml={15}><Speaker /></Slot>
          <ImeGlyph $ml={9}>英</ImeGlyph>
          <Slot $ml={18}><SogouI /></Slot>
          <TrayText $ml={26} $size={19}>20:20</TrayText>
          <Slot $ml={29}><Notif /></Slot>
          <ShowDesktop />
        </Tray>
      </Taskbar>
    </Shell>
  );
}
